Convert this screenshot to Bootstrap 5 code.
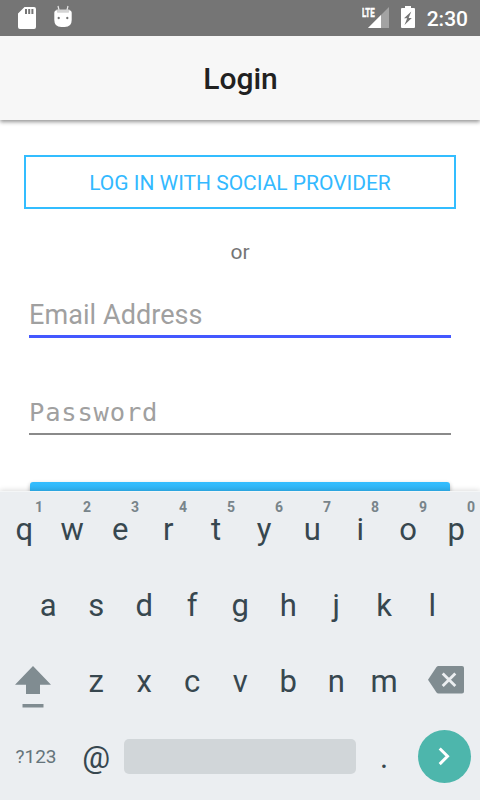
<!DOCTYPE html>
<html lang="en">
<head>
<meta charset="utf-8">
<meta name="viewport" content="width=device-width, initial-scale=1">
<title>Login</title>
<link rel="stylesheet" href="https://cdn.jsdelivr.net/npm/bootstrap@5.3.0/dist/css/bootstrap.min.css">
<style>
  body { width: 480px; height: 800px; font-family: Roboto, sans-serif; background: #fff; }
  svg { display: block; flex: none; }
  .status-bar { height: 36px; background: #757575; color: #fff; padding: 0 12px 0 18px; z-index: 2; }
  .clock { font-size: 21px; line-height: 38px; height: 36px; font-weight: 500; margin-left: 11.500px; }
  .battery { margin-left: 12.500px; }
  .app-bar { height: 84px; background: #f7f7f7; padding-top: 1px; box-shadow: 0 2px 4px rgba(0,0,0,.42); z-index: 1; }
  .app-title { font-size: 30px; line-height: 84px; font-weight: 500; color: #212121; padding-left: 1px; }
  .login-form { height: 371px; padding: 35px 24px 0; }
  .btn-social { height: 54px; padding: 1px 0 0 0; border: 2px solid #33bdff; color: #33b9ff; font-size: 21px; line-height: 51px; letter-spacing: -.02px; }
  .divider-text { font-size: 21px; line-height: 24px; margin-top: 31px; color: #757575; }
  .field { width: 422px; margin-left: 5px; padding: 0; border: 0; background: transparent; font-size: 27px; line-height: 32px; box-shadow: none !important; }
  .field::placeholder { color: #a0a0a0; opacity: 1; }
  .field-email { height: 43px; margin-top: 31px; padding-bottom: 1px; border-bottom: 3px solid #4458ff; letter-spacing: .07px; }
  .field-password { height: 41px; margin-top: 56px; padding-bottom: 3px; border-bottom: 2px solid #8a8a8a; font-family: "DejaVu Sans Mono", monospace; font-size: 25.5px; letter-spacing: .8px; }
  .btn-login { width: 420px; height: 54px; margin: 47px 0 0 6px; padding: 0; border: 0; border-radius: 3px; background: linear-gradient(#33bdff, #2fb3f2 10px); box-shadow: 0 2px 4px rgba(0,0,0,.3); }
  .keyboard { height: 309px; background: #ebeef1; color: #37474f; box-shadow: 0 -1px 5px rgba(0,0,0,.14); border-top: 1px solid #f4f6f7; z-index: 2; }
  .key-row { height: 76px; }
  .key { width: 48px; height: 76px; font-size: 31px; line-height: 76px; padding-left: .4px; }
  .hint { top: 6px; left: 29px; width: 20px; font-size: 14px; line-height: 18px; font-weight: 700; color: #78848a; }
  .wide-key { width: 72px; }
  .symbols { font-size: 19px; line-height: 75px; color: #65747b; }
  .space-bar { width: 232px; height: 35px; margin: 0 4px; border-radius: 5px; background: #d1d6d9; }
  .enter-key { width: 53px; height: 53px; margin-left: 10px; background: #4db6ac; }
  .space-bar, .enter-key, .symbols { margin-bottom: 4px; }
</style>
<script src="https://cdn.jsdelivr.net/npm/bootstrap@5.3.0/dist/js/bootstrap.bundle.min.js"></script>
</head>
<body class="d-flex flex-column overflow-hidden m-0">
  <header class="status-bar position-relative d-flex align-items-center flex-shrink-0">
    <svg width="18" height="36" viewBox="0 0 18 36"><path fill="#fff" fill-rule="evenodd" d="M6.500 7H16q2 0 2 2v18q0 2-2 2H2q-2 0-2-2V13.500zM7 9v5h2V9zm3.200 0v5h2V9zm3.200 0v5h2V9z"/></svg>
    <svg class="ms-3" width="22" height="36" viewBox="0 0 22 36"><path d="M6 6l1 4M16 6l-1 4" stroke="#e8e8e8" stroke-width="1.200"/><path fill="#d4d4d4" d="M4.500 13V9.500h13V13z"/><path fill="#fff" fill-rule="evenodd" d="M2.300 12.500q0-2 2.400-2.500l.5 2.700h11.600l.5-2.700q2.400.5 2.400 2.500V20q0 7-7 7H9.300q-7 0-7-7zM6.700 16.800a1.200 1.200 0 1 0 .01 0zm8.600 0a1.200 1.200 0 1 0 .01 0z"/></svg>
    <svg class="ms-auto" width="27" height="36" viewBox="0 0 27 36"><path fill="#a3a3a3" d="M27 7v21H6z"/><path fill="#fff" d="M19 15v13H6z"/><path fill="#757575" d="M0 6h14v11H0z"/><text transform="translate(-.1 16.500) scale(.61 1)" fill="#fff" stroke="#fff" stroke-width=".5" font-family="Roboto, sans-serif" font-size="13" font-weight="700">LTE</text></svg>
    <svg class="battery" width="14" height="36" viewBox="0 0 14 36"><path fill="#fff" fill-rule="evenodd" d="M4 6h6v2h3q1 0 1 1v18q0 1-1 1H1q-1 0-1-1V9q0-1 1-1h3zM10.300 11.500L3 18.300h3.200L3.500 25l7.300-7H7.600z"/></svg>
    <span class="clock">2:30</span>
  </header>
  <nav class="app-bar position-relative text-center flex-shrink-0">
    <h1 class="app-title m-0">Login</h1>
  </nav>
  <main class="login-form overflow-hidden flex-shrink-0">
    <button type="button" class="btn btn-social rounded-0 w-100 d-block">LOG IN WITH SOCIAL PROVIDER</button>
    <p class="divider-text text-center mb-0">or</p>
    <input type="email" class="form-control field field-email rounded-0" placeholder="Email Address" aria-label="Email Address">
    <input type="password" class="form-control field field-password rounded-0" placeholder="Password" aria-label="Password">
    <button type="button" class="btn btn-login d-block" aria-label="Log in"></button>
  </main>
  <section class="keyboard position-relative flex-shrink-0 text-center">
    <div class="key-row d-flex">
      <div class="key position-relative">q<span class="hint position-absolute">1</span></div>
      <div class="key position-relative">w<span class="hint position-absolute">2</span></div>
      <div class="key position-relative">e<span class="hint position-absolute">3</span></div>
      <div class="key position-relative">r<span class="hint position-absolute">4</span></div>
      <div class="key position-relative">t<span class="hint position-absolute">5</span></div>
      <div class="key position-relative">y<span class="hint position-absolute">6</span></div>
      <div class="key position-relative">u<span class="hint position-absolute">7</span></div>
      <div class="key position-relative">i<span class="hint position-absolute">8</span></div>
      <div class="key position-relative">o<span class="hint position-absolute">9</span></div>
      <div class="key position-relative">p<span class="hint position-absolute">0</span></div>
    </div>
    <div class="key-row d-flex justify-content-center">
      <div class="key">a</div><div class="key">s</div><div class="key">d</div><div class="key">f</div><div class="key">g</div><div class="key">h</div><div class="key">j</div><div class="key">k</div><div class="key">l</div>
    </div>
    <div class="key-row d-flex">
      <div class="wide-key"><svg width="72" height="76" viewBox="0 644 72 76" fill="#808c91"><path d="M33 666l18 18.700H40V694H26v-9.300H15z"/><path d="M22.500 704h21v3.500h-21z"/></svg></div>
      <div class="key">z</div><div class="key">x</div><div class="key">c</div><div class="key">v</div><div class="key">b</div><div class="key">n</div><div class="key">m</div>
      <div class="wide-key"><svg width="72" height="76" viewBox="408 644 72 76"><path fill="#808c91" d="M438.500 666H462q2 0 2 2v23.500q0 2-2 2h-23.500q-1.300 0-2-1l-8.500-12.700 8.500-12.800q.7-1 2-1z"/><path d="M442.700 673.500l12.600 12.600m0-12.600l-12.600 12.600" stroke="#ebeef1" stroke-width="2.800"/></svg></div>
    </div>
    <div class="key-row d-flex align-items-center">
      <div class="wide-key symbols">?123</div>
      <div class="key">@</div>
      <div class="space-bar"></div>
      <div class="key">.</div>
      <div class="enter-key rounded-circle"><svg width="53" height="53" viewBox="0 0 53 53"><path d="M21.700 18.500l7.800 7.800-7.800 7.800" fill="none" stroke="#fff" stroke-width="3"/></svg></div>
    </div>
  </section>
</body>
</html>
